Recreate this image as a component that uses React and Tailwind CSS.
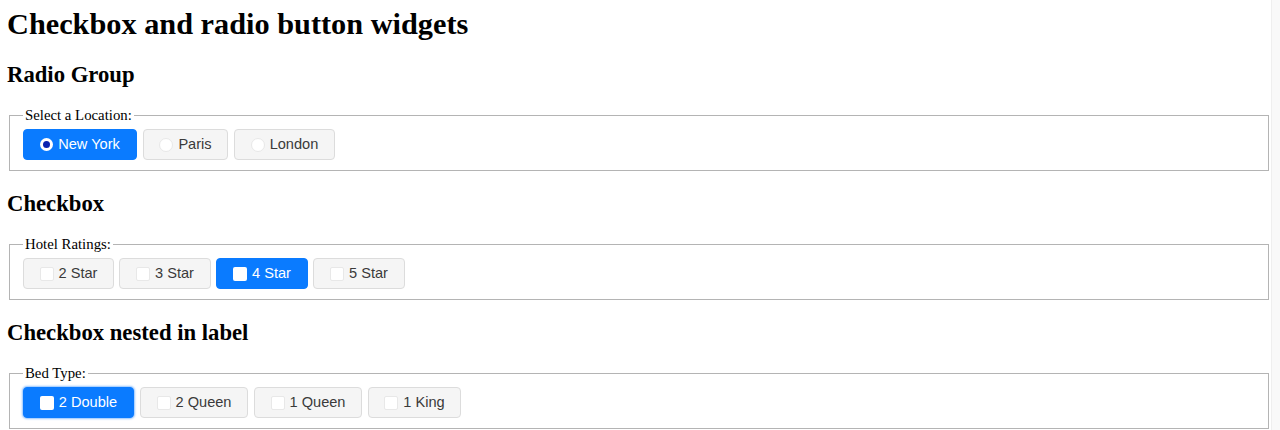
const serif = { fontFamily: '"Liberation Serif", "Times New Roman", serif' };

const locations = [
  { label: "New York", w: "w-[114px]", checked: true },
  { label: "Paris", w: "w-[85px]" },
  { label: "London", w: "w-[101px]" },
];

const ratings = [
  { label: "2 Star", w: "w-[91px]" },
  { label: "3 Star", w: "w-[92px]" },
  { label: "4 Star", w: "w-[92px]", checked: true },
  { label: "5 Star", w: "w-[92px]" },
];

const beds = [
  { label: "2 Double", w: "w-[111px]", checked: true, focus: true },
  { label: "2 Queen", w: "w-[108px]" },
  { label: "1 Queen", w: "w-[108px]" },
  { label: "1 King", w: "w-[93px]" },
];

function Radio({ checked }) {
  return checked ? (
    <span className="w-[13px] h-[13px] rounded-full bg-white flex items-center justify-center">
      <span className="w-[7px] h-[7px] rounded-full bg-[#0a23b0]" />
    </span>
  ) : (
    <span className="w-[14px] h-[14px] rounded-full bg-white border border-[#e8e8e8]" />
  );
}

function Check({ checked }) {
  return (
    <span
      className={`w-[14px] h-[14px] rounded-[2px] bg-white ${checked ? "" : "border border-[#e8e8e8]"}`}
    />
  );
}

function Toggle({ item, kind }) {
  const on = item.checked;
  return (
    <label
      className={`${item.w} h-[31px] flex items-center justify-center gap-[5px] rounded-[4px] border text-[14.6px] ${
        on
          ? "bg-[#0a7bff] border-[#0a7bff] text-white"
          : "bg-[#f5f5f5] border-[#dcdcdc] text-[#3a3a3a]"
      } ${item.focus ? "shadow-[0_0_2px_1px_rgba(10,123,255,0.45)]" : ""}`}
      style={{ fontFamily: '"Liberation Sans", Arial, sans-serif' }}
    >
      {kind === "radio" ? <Radio checked={on} /> : <Check checked={on} />}
      <span>{item.label}</span>
    </label>
  );
}

function Group({ title, legend, items, kind, gap }) {
  return (
    <section>
      <h2 className="mt-[19.5px] mb-[19px] text-[22.7px] leading-[26px] font-bold text-black">{title}</h2>
      <fieldset className="ml-[2px] border-[1.5px] border-[#b4b4b4] px-[13px] pt-[5.5px] pb-[10px]">
        <legend className="px-[2px] text-[14.8px] leading-[17px] text-black">{legend}</legend>
        <div className={`flex ${gap}`}>
          {items.map((it) => (
            <Toggle key={it.label} item={it} kind={kind} />
          ))}
        </div>
      </fieldset>
    </section>
  );
}

export default function App() {
  return (
    <div className="h-[430px] overflow-hidden bg-white flex">
      <div className="flex-1 pl-[7px] pr-[2px]" style={serif}>
        <h1 className="mt-[6px] text-[30.3px] leading-[36px] font-bold text-black">
          Checkbox and radio button widgets
        </h1>
        <Group title="Radio Group" legend="Select a Location:" items={locations} kind="radio" gap="gap-[6px]" />
        <Group title="Checkbox" legend="Hotel Ratings:" items={ratings} kind="check" gap="gap-[5px]" />
        <Group title="Checkbox nested in label" legend="Bed Type:" items={beds} kind="check" gap="gap-[6px]" />
      </div>
      <div className="w-[9px] bg-[#f9f9f9] border-l border-[#efefef]" />
    </div>
  );
}
